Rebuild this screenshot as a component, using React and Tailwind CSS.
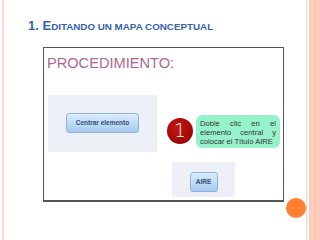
import React from 'react';

export default function App() {
  return (
    <div className="relative w-[320px] h-[240px] bg-white overflow-hidden flex font-['Liberation_Sans',Arial,sans-serif]">
      <div className="w-[2px] ml-[2px] bg-[#fcd9cc]" />

      <div className="flex-1 flex flex-col">
        <div className="h-[47px] pl-[24px] pt-[17px]">
          <h1 className="text-[#3563ab] font-bold leading-none whitespace-nowrap">
            <span className="text-[13px]">1. E</span>
            <span className="text-[9.8px]">DITANDO UN MAPA CONCEPTUAL</span>
          </h1>
        </div>

        <div className="ml-[39px] w-[241px] h-[155px] border border-[#555] border-b-2 flex flex-col">
          <div className="pl-[3px] pt-[8px] text-[14.6px] leading-none text-[#b0668c]">PROCEDIMIENTO:</div>

          <div className="flex mt-[24px] items-start">
            <div className="ml-[4px] w-[109px] h-[57px] bg-[#eef0f8] flex items-center justify-center">
              <div className="w-[73px] h-[20px] rounded-[3px] border border-[#8fb4dc] bg-gradient-to-b from-[#dcecfb] to-[#a7cbf0] text-[#2f4f7a] text-[6.5px] font-bold flex items-center justify-center">
                Centrar elemento
              </div>
            </div>

            <div className="ml-[10px] mt-[23px] w-[26px] h-[26px] rounded-full bg-[radial-gradient(circle_at_40%_35%,#c81414,#8a0000)] text-white text-[19px] leading-none flex items-center justify-center font-['DejaVu_Sans',sans-serif] font-light">
              1
            </div>

            <div className="ml-[3px] mt-[20px] w-[84px] h-[33px] rounded-[6px] bg-[#96f2cb] px-[4px] pt-[4px] text-[7.6px] leading-[9px] text-[#333] text-justify">
              Doble clic en el elemento central y <span className="whitespace-nowrap">colocar el Título AIRE</span>
            </div>
          </div>

          <div className="ml-[128px] mt-[10px] w-[63px] h-[35px] bg-[#eef0f8] flex items-start justify-center pt-[10px]">
            <div className="w-[28px] h-[20px] rounded-[3px] border border-[#8fb4dc] bg-gradient-to-b from-[#dcecfb] to-[#a7cbf0] text-[#2f4f7a] text-[6.5px] font-bold flex items-center justify-center">
              AIRE
            </div>
          </div>
        </div>
      </div>

      <div className="w-px bg-[#fbd0c2]" />
      <div className="w-[2px]" />
      <div className="w-[11px] bg-[linear-gradient(to_right,#fcc6b3,#fdd2c3_30%,#fcc4b0_55%,#fdcfbf_80%,#fcc8b6)]" />

      <div className="absolute left-[286px] top-[198px] w-[20px] h-[20px] rounded-full bg-[#fd8030]" />
    </div>
  );
}
